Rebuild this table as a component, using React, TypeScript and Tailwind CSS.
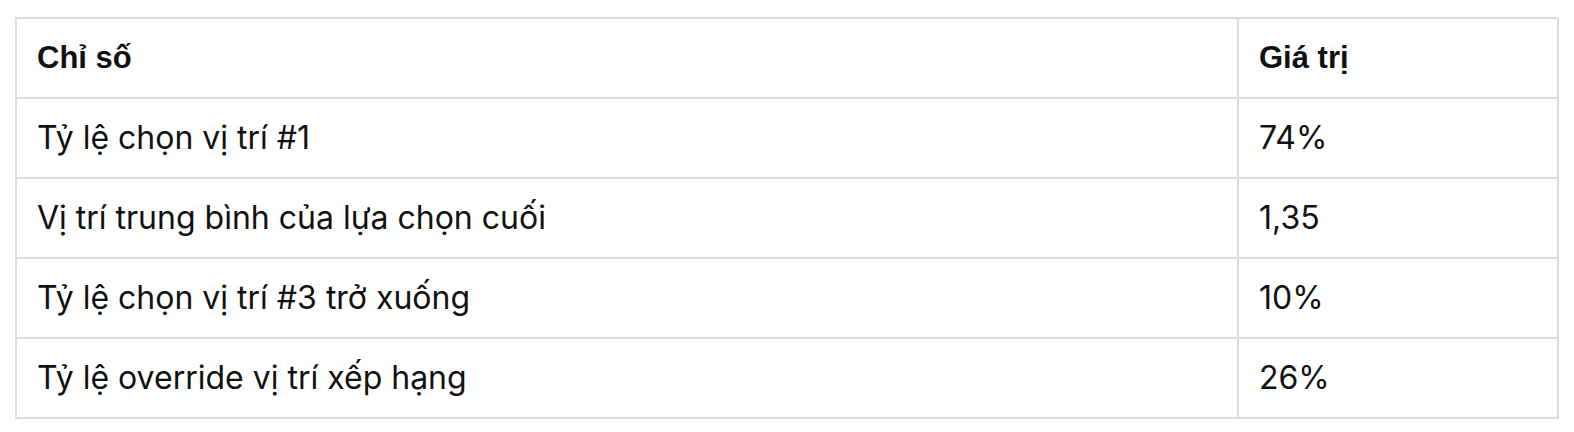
import React from "react";

const rows: [string, string][] = [
  ["Tỷ lệ chọn vị trí #1", "74%"],
  ["Vị trí trung bình của lựa chọn cuối", "1,35"],
  ["Tỷ lệ chọn vị trí #3 trở xuống", "10%"],
  ["Tỷ lệ override vị trí xếp hạng", "26%"],
];

export default function App() {
  return (
    <div className="bg-white w-[1574px] h-[432px] pl-[15px] pr-[15px] pt-[17px]">
      <table className="w-full table-fixed border-collapse text-[#111111]">
        <colgroup>
          <col className="w-[1222px]" />
          <col />
        </colgroup>
        <thead>
          <tr>
            {["Chỉ số", "Giá trị"].map((h) => (
              <th
                key={h}
                className="border-2 border-[#dddddd] text-left font-bold text-[31px] leading-[38px] px-[20px] py-[20px] font-['Liberation_Sans',Arial,sans-serif]"
              >
                {h}
              </th>
            ))}
          </tr>
        </thead>
        <tbody>
          {rows.map(([a, b]) => (
            <tr key={a}>
              <td className="border-2 border-[#dddddd] text-[32px] leading-[38px] px-[20px] py-[20px] font-['Inter',sans-serif]">
                {a}
              </td>
              <td className="border-2 border-[#dddddd] text-[32px] leading-[38px] px-[20px] py-[20px] font-['Inter',sans-serif]">
                {b}
              </td>
            </tr>
          ))}
        </tbody>
      </table>
    </div>
  );
}
